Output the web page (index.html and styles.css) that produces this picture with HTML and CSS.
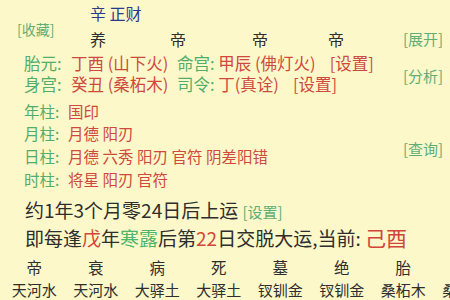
FILE: index.html
```html
<!DOCTYPE html>
<html>
<head>
<meta charset="utf-8">
<link rel="stylesheet" href="styles.css">
</head>
<body>
<div class="page">
  <div class="group g1">
    <div class="fav link">[收藏]</div>
    <div class="mid">
      <div class="title">辛 正财</div>
      <div class="cycle"><span>养</span><span>帝</span><span>帝</span><span>帝</span></div>
    </div>
    <div class="side link b1">[展开]</div>
  </div>

  <div class="group g2">
    <div class="rows">
      <div class="row"><span class="cell"><span class="lab lw1">胎元:</span><span class="val">丁酉 (山下火)</span></span><span class="lab">命宫: </span><span class="val">甲辰 (佛灯火)</span><span class="val set">[设置]</span></div>
      <div class="row"><span class="cell"><span class="lab lw1">身宫:</span><span class="val">癸丑 (桑柘木)</span></span><span class="lab">司令: </span><span class="val">丁(真诠)</span><span class="val set">[设置]</span></div>
    </div>
    <div class="side link s2">[分析]</div>
  </div>

  <div class="group g3">
    <div class="rows">
      <div class="row2"><span class="lab lw2">年柱:</span><span class="val">国印</span></div>
      <div class="row2"><span class="lab lw2">月柱:</span><span class="val">月德 阳刃</span></div>
      <div class="row2"><span class="lab lw2">日柱:</span><span class="val">月德 六秀 阳刃 官符 阴差阳错</span></div>
      <div class="row2"><span class="lab lw2">时柱:</span><span class="val">将星 阳刃 官符</span></div>
    </div>
    <div class="side link s3">[查询]</div>
  </div>

  <div class="line l1">约1年3个月零24日后上运 <span class="link small">[设置]</span></div>
  <div class="line l2">即每逢<span class="red">戊</span>年<span class="green">寒露</span>后第<span class="red">22</span>日交脱大运,当前: <span class="red big">己酉</span></div>

  <div class="strip labels"><span>帝</span><span>衰</span><span>病</span><span>死</span><span>墓</span><span>绝</span><span>胎</span><span></span></div>
  <div class="strip names"><span>天河水</span><span>天河水</span><span>大驿土</span><span>大驿土</span><span>钗钏金</span><span>钗钏金</span><span>桑柘木</span><span>桑柘木</span></div>
</div>
</body>
</html>
```

FILE: styles.css
```css
html, body {
  margin: 0;
  padding: 0;
  background: #fcf8c9;
}
.page {
  width: 450px;
  height: 300px;
  overflow: hidden;
  font-family: "Noto Sans CJK SC", "Noto Sans", sans-serif;
  color: #2e2e2e;
}
.link { color: #5fae76; }
.lab { color: #52ad6a; }
.val { color: #cf4a3e; }
.red { color: #d2453a; }
.green { color: #4fb46c; }

.group { display: flex; }
.side {
  margin-left: auto;
  width: 47px;
  font-size: 15px;
  line-height: 18px;
  align-self: center;
  white-space: nowrap;
}

.g1 { padding-top: 1.5px; height: 48.5px; }
.fav {
  width: 73px;
  padding-left: 17px;
  padding-top: 7px;
  font-size: 14px;
  line-height: 18px;
  align-self: center;
}
.mid { display: flex; flex-direction: column; }
.title { font-size: 16px; line-height: 22px; color: #2c3a8e; }
.cycle {
  display: grid;
  grid-template-columns: 80px 82px 76px 20px;
  font-size: 16px;
  line-height: 22px;
  margin-top: 4.5px;
}
.b1 { align-self: flex-end; margin-bottom: 2px; }

.g2 { padding-top: 3px; }
.s2 { padding-top: 4px; }
.rows { padding-left: 24px; }
.row { font-size: 16.5px; line-height: 21px; white-space: nowrap; }
.cell { display: inline-block; width: 153px; }
.lw1 { display: inline-block; width: 47px; }
.set { margin-left: 14px; }

.g3 { padding-top: 4.6px; }
.s3 { padding-top: 7px; }
.row2 { font-size: 15.5px; line-height: 22.8px; white-space: nowrap; }
.lw2 { display: inline-block; width: 44px; }

.line { padding-left: 25px; font-size: 19px; white-space: nowrap; }
.l1 { margin-top: 7.7px; line-height: 24px; }
.small { font-size: 15px; }
.l2 { line-height: 27px; }
.big { font-size: 21px; }

.strip {
  display: flex;
  gap: 15px;
  margin-left: 11px;
  white-space: nowrap;
}
.strip span { flex: 0 0 46.5px; text-align: center; }
.labels { font-size: 15.5px; line-height: 22px; margin-top: 4.5px; }
.names { font-size: 15px; line-height: 20px; margin-top: 2.5px; }
```
